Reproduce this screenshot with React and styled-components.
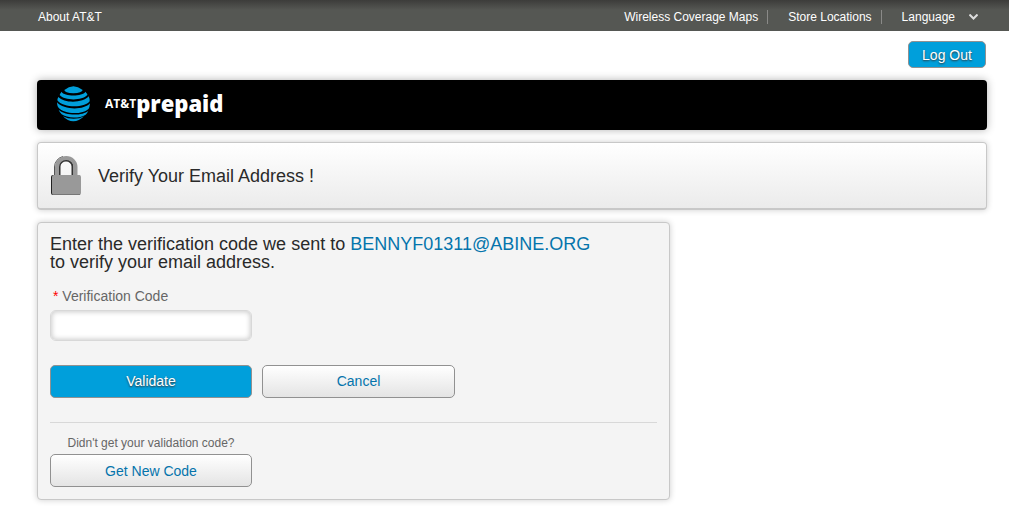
import React from "react";
import styled, { createGlobalStyle, css } from "styled-components";

const GlobalStyle = createGlobalStyle`
  * { box-sizing: border-box; }
  body {
    margin: 0;
    background: #fff;
    color: #2a2a2a;
    font-family: "Liberation Sans", Arial, sans-serif;
    font-size: 14px;
  }
`;

const TopBar = styled.nav`
  display: flex;
  justify-content: space-between;
  height: 31px;
  padding: 10px 31px 0 38px;
  background: linear-gradient(#3c3c3a, #555753 10px);
  font-size: 12px;
  line-height: 14px;
`;

const TopLinks = styled.div`
  display: flex;
  align-items: flex-start;
`;

const TopLink = styled.a`
  color: #fff;
  text-decoration: none;
  ${(p) =>
    p.$divided &&
    css`
      margin-right: 20px;
      padding-right: 9px;
      border-right: 1px solid #8a8a88;
    `}
`;

const LanguageButton = styled.button`
  display: flex;
  align-items: center;
  gap: 14px;
  height: 14px;
  padding: 0;
  border: 0;
  background: none;
  color: #fff;
  font: inherit;
`;

const Page = styled.div`
  display: flex;
  flex-direction: column;
  gap: 12px;
  padding: 10px 22px 11px 37px;
`;

const Button = styled.button`
  width: ${(p) => p.$width}px;
  height: 33px;
  padding: 0;
  border: 1px solid #919191;
  border-radius: 5px;
  background: linear-gradient(#fff, #e4e4e4);
  color: #0574ac;
  font: inherit;
  line-height: 18px;
  ${(p) =>
    p.$primary &&
    css`
      background: #009fdb;
      color: #fff;
      text-shadow: 0 1px 2px #333;
    `}
`;

const LogOutButton = styled(Button)`
  align-self: flex-end;
  height: 27px;
  margin-right: 1px;
`;

const Banner = styled.header`
  display: flex;
  height: 50px;
  padding: 6px 20px;
  border-radius: 4px;
  background: #000;
  box-shadow: 0 0 8px rgba(0, 0, 0, 0.3);
`;

const Brand = styled.div`
  display: flex;
  align-items: flex-start;
  padding: 2px 0 0 15px;
  color: #fff;
  font-family: "Open Sans", sans-serif;
  font-weight: 700;
`;

const BrandName = styled.span`
  font-size: 12px;
  line-height: 32px;
`;

const BrandProduct = styled.span`
  font-size: 22px;
  font-weight: 800;
  line-height: 30px;
`;

const TitlePanel = styled.div`
  display: flex;
  align-items: center;
  gap: 17px;
  height: 68px;
  padding: 1px 13px 0;
  border: 1px solid #c8c8c8;
  border-bottom-width: 2px;
  border-radius: 4px;
  background: linear-gradient(#fff, #ebebeb);
  box-shadow: 0 0 6px rgba(0, 0, 0, 0.2);
`;

const Title = styled.h1`
  margin: 0;
  font-size: 18px;
  font-weight: 400;
  line-height: 20px;
`;

const FormPanel = styled.form`
  width: 66.67%;
  padding: 12px;
  border: 1px solid #c8c8c8;
  border-radius: 4px;
  background: #f4f4f4;
  box-shadow: 0 0 6px rgba(0, 0, 0, 0.2);
`;

const Intro = styled.p`
  margin: 0 0 16px;
  font-size: 18px;
  line-height: 18px;
`;

const Email = styled.span`
  color: #0574ac;
`;

const Label = styled.label`
  display: block;
  margin-bottom: 5px;
  padding-left: 3px;
  color: #666;
  line-height: 18px;
`;

const Required = styled.span`
  color: #f00;
`;

const CodeInput = styled.input`
  display: block;
  width: 202px;
  height: 31px;
  padding: 0 8px;
  border: 1px solid #d8d8d8;
  border-radius: 6px;
  background: #fff;
  box-shadow: inset 0 0 5px 1px #ccc;
  font: inherit;
`;

const Actions = styled.div`
  display: flex;
  gap: 10px;
  padding: 24px 0;
  border-bottom: 1px solid #d8d8d8;

  ${Button} {
    padding-bottom: 2px;
  }
`;

const Resend = styled.div`
  display: flex;
  flex-direction: column;
  width: 202px;
  padding-top: 12px;
`;

const Hint = styled.p`
  margin: 0 0 3px;
  color: #666;
  font-size: 12px;
  line-height: 16px;
  text-align: center;
`;

function Globe() {
  return (
    <svg width="33" height="36" viewBox="0 0 99 108" fill="#009fdb" aria-hidden="true">
      <path d="M22 12Q49 -10 77 12Q75 21 49 22Q23 21 22 12Z" />
      <path d="M14 17C20 32 78 32 85 17Q92 24 91 27C74 45 23 44 8 27Q9 22 14 17Z" />
      <path d="M4 33C22 53 80 51 95 31Q99 40 98 46C82 67 18 66 1 43Q1 38 4 33Z" />
      <path d="M0 49C20 73 82 73 99 52Q98 64 95 68C76 87 20 86 3 63Q0 57 0 49Z" />
      <path d="M5 71C26 90 76 90 94 74Q90 83 86 86C68 98 29 97 14 85Q8 79 5 71Z" />
      <path d="M18 91C35 101 65 101 81 91Q66 106 49 106Q32 106 18 91Z" />
    </svg>
  );
}

function Lock() {
  return (
    <svg width="30" height="40" viewBox="0 0 30 40" aria-hidden="true">
      <path d="M3.5 20V11A11 11 0 0 1 12 0.5" fill="none" stroke="#555" />
      <path d="M8.5 20V10.5A6.5 6 0 0 1 21.5 10.5V20" fill="none" stroke="#333" strokeWidth="2" />
      <path d="M6 20V11A9.25 9 0 0 1 24.5 11V20" fill="none" stroke="#999" strokeWidth="4" />
      <rect y="19" width="29" height="20" rx="2" fill="#222" />
      <rect x="1" y="19" width="29" height="20" rx="2" fill="#999" />
      <path d="M2 38.5H29" stroke="#777" />
    </svg>
  );
}

export default function App() {
  return (
    <>
      <GlobalStyle />
      <TopBar>
        <TopLink href="#about">About AT&amp;T</TopLink>
        <TopLinks>
          <TopLink href="#coverage" $divided>Wireless Coverage Maps</TopLink>
          <TopLink href="#stores" $divided>Store Locations</TopLink>
          <LanguageButton type="button">
            Language
            <svg width="9" height="6" viewBox="0 0 9 6" fill="none" stroke="#ddd" strokeWidth="2" aria-hidden="true">
              <path d="M0.5 0.5L4.5 4.5L8.5 0.5" />
            </svg>
          </LanguageButton>
        </TopLinks>
      </TopBar>
      <Page>
        <LogOutButton type="button" $primary $width={78}>Log Out</LogOutButton>
        <Banner>
          <Globe />
          <Brand>
            <BrandName>AT&amp;T</BrandName>
            <BrandProduct>prepaid</BrandProduct>
          </Brand>
        </Banner>
        <TitlePanel>
          <Lock />
          <Title>Verify Your Email Address !</Title>
        </TitlePanel>
        <FormPanel>
          <Intro>
            Enter the verification code we sent to <Email>BENNYF01311@ABINE.ORG</Email>
            <br />
            to verify your email address.
          </Intro>
          <Label htmlFor="code">
            <Required>*</Required> Verification Code
          </Label>
          <CodeInput id="code" type="text" />
          <Actions>
            <Button type="submit" $primary $width={202}>Validate</Button>
            <Button type="button" $width={193}>Cancel</Button>
          </Actions>
          <Resend>
            <Hint>Didn't get your validation code?</Hint>
            <Button type="button" $width={202}>Get New Code</Button>
          </Resend>
        </FormPanel>
      </Page>
    </>
  );
}
